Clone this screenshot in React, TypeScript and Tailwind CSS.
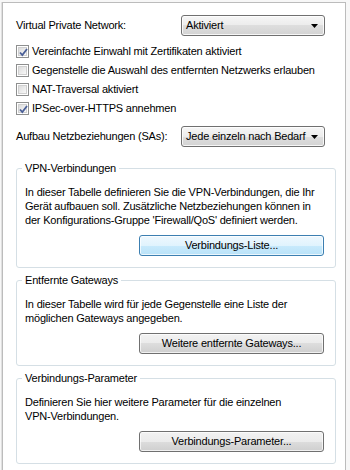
import React from "react";

const font = "font-['Tahoma','Liberation_Sans',Arial,sans-serif] text-[11px] leading-[13px] tracking-[-0.2px] text-black";

const Combo = ({ value }: { value: string }) => (
  <div className="w-[144px] h-[21px] border border-[#707070] rounded-[3px] flex items-center justify-between pl-[4px] pr-[6px] bg-[linear-gradient(#f6f6f6_0%,#ececec_50%,#dedede_50%,#d3d3d3_100%)] shadow-[inset_0_0_0_1px_rgba(255,255,255,0.8)]">
    <span className="whitespace-nowrap">{value}</span>
    <svg className="shrink-0" width="7" height="4" viewBox="0 0 7 4">
      <path d="M0 0h7L3.5 4z" fill="#000" />
    </svg>
  </div>
);

const Check = ({ checked, label }: { checked?: boolean; label: string }) => (
  <div className="h-[19px] flex items-center">
    <div className="w-[13px] h-[13px] border border-[#8e8f8f] bg-white p-[1px] shrink-0">
      <div className="w-full h-full border border-[#d0d0d0] bg-[linear-gradient(135deg,#dcdcdc,#f8f8f8)] relative">
        {checked && (
          <svg className="absolute left-[-1px] top-[-1px]" width="11" height="11" viewBox="0 0 11 11">
            <path d="M2 5.5l2.3 2.5L9 2" stroke="#4a5f97" strokeWidth="1.8" fill="none" />
          </svg>
        )}
      </div>
    </div>
    <span className="ml-[3px] whitespace-nowrap">{label}</span>
  </div>
);

const Btn = ({ children, primary }: { children: React.ReactNode; primary?: boolean }) => (
  <div
    className={
      "w-[185px] h-[21px] rounded-[3px] border flex items-center justify-center shadow-[inset_0_0_0_1px_rgba(255,255,255,0.7)] " +
      (primary
        ? "border-[#3c7fb1] bg-[linear-gradient(#eef8fe_0%,#e0f3fd_50%,#c8eafc_50%,#b9e2f8_100%)]"
        : "border-[#707070] bg-[linear-gradient(#f2f2f2_0%,#ebebeb_50%,#dddddd_50%,#cfcfcf_100%)]")
    }
  >
    {children}
  </div>
);

const Group = ({ title, lines, button, primary }: { title: string; lines: string[]; button: string; primary?: boolean }) => (
  <fieldset className="border border-[#d5dfe5] rounded-[3px] w-[320px] pl-[8px] pr-[11px] pt-[10px] pb-[11px]">
    <legend className="-ml-[3px] px-[3px]">{title}</legend>
    <div className="leading-[14px]">
      {lines.map((l) => (
        <div key={l} className="whitespace-nowrap">{l}</div>
      ))}
    </div>
    <div className="flex justify-end mt-[8px]">
      <Btn primary={primary}>{button}</Btn>
    </div>
  </fieldset>
);

export default function App() {
  return (
    <div className={"w-[350px] h-[470px] bg-[#f7f7f7] overflow-hidden pl-[1px] pt-[2px] " + font}>
      <div className="border-l border-l-[#e0e0e0] h-full">
        <div className="w-[344px] h-[470px] bg-white border-t border-r border-l border-[#bcbcbc] pl-[13px] pt-[12px]">
          <div className="flex items-center">
            <span className="w-[165px]">Virtual Private Network:</span>
            <Combo value="Aktiviert" />
          </div>
          <div className="mt-[6px]">
            <Check checked label="Vereinfachte Einwahl mit Zertifikaten aktiviert" />
            <Check label="Gegenstelle die Auswahl des entfernten Netzwerks erlauben" />
            <Check label="NAT-Traversal aktiviert" />
            <Check checked label="IPSec-over-HTTPS annehmen" />
          </div>
          <div className="flex items-center mt-[8px]">
            <span className="w-[165px]">Aufbau Netzbeziehungen (SAs):</span>
            <Combo value="Jede einzeln nach Bedarf" />
          </div>
          <div className="mt-[15px] flex flex-col gap-[6px]">
            <Group
              primary
              title="VPN-Verbindungen"
              lines={[
                "In dieser Tabelle definieren Sie die VPN-Verbindungen, die Ihr",
                "Gerät aufbauen soll. Zusätzliche Netzbeziehungen können in",
                "der Konfigurations-Gruppe 'Firewall/QoS' definiert werden.",
              ]}
              button="Verbindungs-Liste..."
            />
            <Group
              title="Entfernte Gateways"
              lines={["In dieser Tabelle wird für jede Gegenstelle eine Liste der", "möglichen Gateways angegeben."]}
              button="Weitere entfernte Gateways..."
            />
            <Group
              title="Verbindungs-Parameter"
              lines={["Definieren Sie hier weitere Parameter für die einzelnen", "VPN-Verbindungen."]}
              button="Verbindungs-Parameter..."
            />
          </div>
        </div>
      </div>
    </div>
  );
}
